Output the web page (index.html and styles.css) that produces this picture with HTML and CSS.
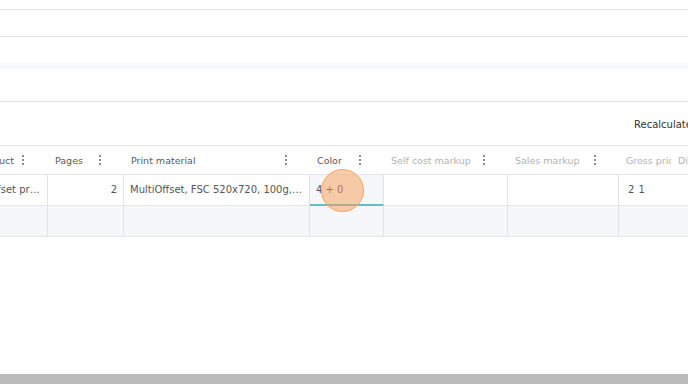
FILE: index.html
```html
<!DOCTYPE html>
<html lang="en">

<head>
  <meta charset="UTF-8">
  <meta name="viewport" content="width=device-width, initial-scale=1.0">
  <title>Order items</title>
  <link rel="stylesheet" href="styles.css">
</head>

<body>
  <div class="page">
    <div class="rule first"></div>
    <div class="blank"></div>
    <div class="rule"></div>
    <div class="blank"></div>
    <div class="band"></div>
    <div class="blank tall"></div>
    <div class="rule"></div>

    <div class="toolbar">
      <button class="recalc" type="button">Recalculate</button>
    </div>

    <div class="grid_wrap">
      <div class="grid">
        <div class="grid_header">
          <span class="col_head first_col"><span>Product</span><i class="kebab"></i></span>
          <span class="col_head"><span>Pages</span><i class="kebab"></i></span>
          <span class="col_head"><span>Print material</span><i class="kebab"></i></span>
          <span class="col_head"><span>Color</span><i class="kebab"></i></span>
          <span class="col_head muted"><span>Self cost markup</span><i class="kebab"></i></span>
          <span class="col_head muted"><span>Sales markup</span><i class="kebab"></i></span>
          <span class="col_head muted clip"><span>Gross price</span></span>
          <span class="col_head muted clip"><span>Discount</span></span>
        </div>

        <div class="grid_row">
          <span class="cell">Offset printing</span>
          <span class="cell num">2</span>
          <span class="cell material">MultiOffset, FSC 520x720, 100g, white</span>
          <span class="cell editing">4 + 0</span>
          <span class="cell"></span>
          <span class="cell"></span>
          <span class="cell gross">2 1</span>
          <span class="cell"></span>
        </div>

        <div class="grid_row alt">
          <span class="cell"></span>
          <span class="cell"></span>
          <span class="cell"></span>
          <span class="cell"></span>
          <span class="cell"></span>
          <span class="cell"></span>
          <span class="cell gross"></span>
          <span class="cell"></span>
        </div>
      </div>

      <!-- click marker from the screen recording -->
      <div class="click_mark"></div>
    </div>

    <div class="filler"></div>
    <div class="scroll_bar"></div>
  </div>
</body>

</html>
```

FILE: styles.css
```css
/* base */
html,
body {
  margin: 0;
  padding: 0;
  overflow: hidden;
}

body {
  font-family: "DejaVu Sans", "Liberation Sans", sans-serif;
  background-color: #fff;
  color: #555;
}

.page {
  display: flex;
  flex-direction: column;
  height: 384px;
  width: 688px;
}

.rule {
  height: 1px;
  background-color: #e2e2e2;
}

.rule.first {
  margin-top: 9px;
}

.blank {
  height: 26px;
}

.blank.tall {
  height: 32px;
}

.band {
  height: 6px;
  background-color: #f8f9fb;
}

/* toolbar */
.toolbar {
  height: 43px;
  display: flex;
  align-items: center;
  padding-left: 634px;
  white-space: nowrap;
  overflow: hidden;
}

.recalc {
  font-family: inherit;
  font-size: 10px;
  color: #333;
  background: none;
  border: none;
  padding: 0;
  margin-top: 1px;
}

/* grid */
.grid_wrap {
  position: relative;
  overflow: hidden;
  border-top: 1px solid #e6e6e6;
}

.grid {
  margin-left: -20px;
  width: 780px;
}

.grid_header,
.grid_row {
  display: grid;
  grid-template-columns: 68px 76px 186px 74px 124px 111px 52px 86px;
}

.grid_header {
  height: 28px;
  border-bottom: 1px solid #e6e6e6;
}

.col_head {
  display: flex;
  align-items: center;
  justify-content: space-between;
  padding: 0 23px 0 7px;
  font-size: 9.5px;
  color: #5a5a5a;
  white-space: nowrap;
  overflow: hidden;
}

.col_head.first_col {
  justify-content: flex-end;
  gap: 8px;
  padding: 0 24px 0 0;
}

.col_head.muted {
  color: #b2b2b2;
}

.col_head.clip {
  justify-content: flex-start;
  padding-right: 0;
}

.kebab {
  width: 2px;
  height: 2px;
  border-radius: 50%;
  background-color: #666;
  box-shadow: 0 -4px 0 #666, 0 4px 0 #666;
  flex-shrink: 0;
}

.grid_row {
  height: 30px;
  border-bottom: 1px solid #e6e6e6;
}

.grid_row.alt {
  background-color: #f6f7f9;
}

.cell {
  display: block;
  line-height: 30px;
  padding: 0 6px;
  border-right: 1px solid #e3e3e3;
  font-size: 10px;
  color: #555;
  white-space: nowrap;
  overflow: hidden;
  text-overflow: ellipsis;
  box-sizing: border-box;
  min-width: 0;
}

.cell.num {
  text-align: right;
}

.cell.material {
  padding-right: 7px;
}

.cell.gross {
  padding-left: 9px;
  letter-spacing: 0.5px;
  border-right: none;
}

.cell.editing {
  line-height: 29px;
  background-color: #f6f7f9;
  border-bottom: 2px solid #5fc0c7;
  margin-bottom: -1px;
}

.click_mark {
  position: absolute;
  left: 321px;
  top: 23px;
  width: 41px;
  height: 41px;
  border-radius: 50%;
  background-color: rgba(245, 158, 85, 0.5);
  border: 1.5px solid #f2a563;
}

.filler {
  flex: 1;
}

.scroll_bar {
  height: 10px;
  background-color: #bbb;
}
```
